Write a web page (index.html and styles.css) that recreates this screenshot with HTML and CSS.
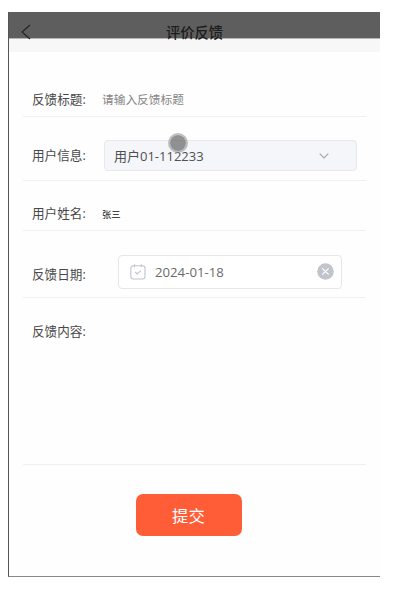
FILE: index.html
```html
<!DOCTYPE html>
<html lang="zh-CN">
<head>
    <meta charset="UTF-8">
    <meta name="viewport" content="width=device-width, initial-scale=1.0">
    <title>评价反馈</title>
    <link rel="stylesheet" href="styles.css">
</head>
<body>
    <div class="page">
        <header class="header">
            <svg class="back" viewBox="0 0 10 16" fill="none" stroke="#222" stroke-width="1.1">
                <path d="M9 1L1 8l8 7"/>
            </svg>
            <h1>评价反馈</h1>
        </header>
        <form class="form" id="feedbackForm">
            <div class="row row-title">
                <label for="title">反馈标题:</label>
                <input type="text" id="title" name="title" placeholder="请输入反馈标题">
            </div>
            <div class="row row-user">
                <label>用户信息:</label>
                <div class="select">
                    <span>用户01-112233</span>
                    <svg class="arrow" viewBox="0 0 10 6" fill="none" stroke="#a3a6ac" stroke-width="1.1">
                        <path d="M0.7 0.7L5 5l4.3-4.3"/>
                    </svg>
                    <i class="touch"></i>
                </div>
            </div>
            <div class="row row-name">
                <label>用户姓名:</label>
                <span class="name">张三</span>
            </div>
            <div class="row row-date">
                <label>反馈日期:</label>
                <div class="date">
                    <svg class="calendar" viewBox="0 0 16 16" fill="none" stroke="#c0c4cc" stroke-width="1.1">
                        <rect x="0.8" y="1.8" width="14.2" height="13.2" rx="2.5"/>
                        <path d="M4.5 0.3v3M11.3 0.3v3M5.2 8l2 2 3.6-3.3"/>
                    </svg>
                    <span>2024-01-18</span>
                    <svg class="clear" viewBox="0 0 17 17">
                        <circle cx="8.5" cy="8.5" r="8.3" fill="#c0c4cc"/>
                        <path d="M5.3 5.3l6.4 6.4M11.7 5.3l-6.4 6.4" stroke="#fff" stroke-width="1.2"/>
                    </svg>
                </div>
            </div>
            <div class="row row-content">
                <label for="content">反馈内容:</label>
                <textarea id="content" name="content"></textarea>
            </div>
            <button type="submit">提交</button>
        </form>
    </div>
</body>
</html>
```
FILE: styles.css
```css
* {
    margin: 0;
    padding: 0;
    box-sizing: border-box;
    font-family: "Open Sans", "Noto Sans CJK SC", sans-serif;
}

body {
    background: #fff;
    padding: 12px 0 0 8px;
}

.page {
    width: 372px;
    height: 565px;
    border-left: 1px solid #555;
    border-bottom: 1px solid #888;
    background: #fefefe;
}

.header {
    display: flex;
    align-items: center;
    height: 40px;
    padding: 0 0 0 12px;
    background: linear-gradient(#5e5e5e 26px, #b8b4b4 26px, #b8b4b4 27px, #f7f7f7 27px);
}

.back {
    width: 10px;
    height: 16px;
    margin-bottom: 1px;
}

.header h1 {
    flex: 1;
    padding-right: 22px;
    text-align: center;
    font-family: "Noto Sans CJK SC", sans-serif;
    font-size: 14.3px;
    line-height: 20px;
    font-weight: 500;
    color: #1c1c1e;
}

.form {
    display: flex;
    flex-direction: column;
    padding: 0 14px;
}

.row {
    display: flex;
    align-items: center;
    border-bottom: 1px solid #f0f0f0;
    padding-left: 9px;
}

.row label {
    flex: none;
    width: 71px;
    padding-top: 1px;
    font-size: 12.6px;
    line-height: 18px;
    color: #484848;
}

.row-title {
    height: 65px;
    padding-top: 30px;
}

.row-title input {
    flex: 1;
    min-width: 0;
    margin-left: -1px;
    border: none;
    outline: none;
    background: none;
    font-size: 11.7px;
    color: #333;
}

.row-title input::placeholder {
    color: #858585;
}

.row-user {
    height: 64px;
    padding-top: 14px;
}

.select {
    position: relative;
    display: flex;
    align-items: center;
    justify-content: space-between;
    width: 253px;
    height: 31px;
    margin-left: 1px;
    padding: 0 27px 0 9px;
    border: 1px solid #e6e8ec;
    border-radius: 4px;
    background: #f4f6fa;
    font-size: 13px;
    line-height: 18px;
    color: #505050;
}

.arrow {
    width: 10px;
    height: 6px;
}

/* точка касания */
.touch {
    position: absolute;
    left: 63px;
    top: -8px;
    width: 20px;
    height: 20px;
    border: 2px solid rgba(150, 150, 150, 0.6);
    border-radius: 50%;
    background: rgba(110, 110, 110, 0.75);
    background-clip: padding-box;
}

.row-name {
    height: 50px;
    padding-top: 15px;
}

.name {
    font-size: 9.3px;
    line-height: 14px;
    margin-left: -1px;
    padding-top: 4px;
    color: #111;
}

.row-date {
    height: 67px;
    padding-top: 15px;
}

.row-date label {
    padding-top: 6px;
}

.date {
    display: flex;
    align-items: center;
    width: 224px;
    height: 34px;
    margin-left: 15px;
    padding: 0 7px 0 11px;
    border: 1px solid #e6e7ea;
    border-radius: 4px;
    background: #fff;
    font-size: 13.2px;
    line-height: 18px;
    color: #6a6a6a;
}

.calendar {
    width: 16px;
    height: 16px;
    margin-right: 9px;
}

.clear {
    width: 17px;
    height: 17px;
    margin-left: auto;
}

.row-content {
    height: 167px;
    align-items: flex-start;
    padding-top: 24px;
}

.row-content textarea {
    flex: 1;
    height: 130px;
    border: none;
    outline: none;
    resize: none;
    background: none;
    font-size: 12px;
}

button {
    align-self: center;
    width: 106px;
    height: 42px;
    margin: 29px 12px 0 0;
    border: none;
    border-radius: 7px;
    background: #ff5c38;
    font-size: 16.4px;
    color: #fff;
    cursor: pointer;
}
```
